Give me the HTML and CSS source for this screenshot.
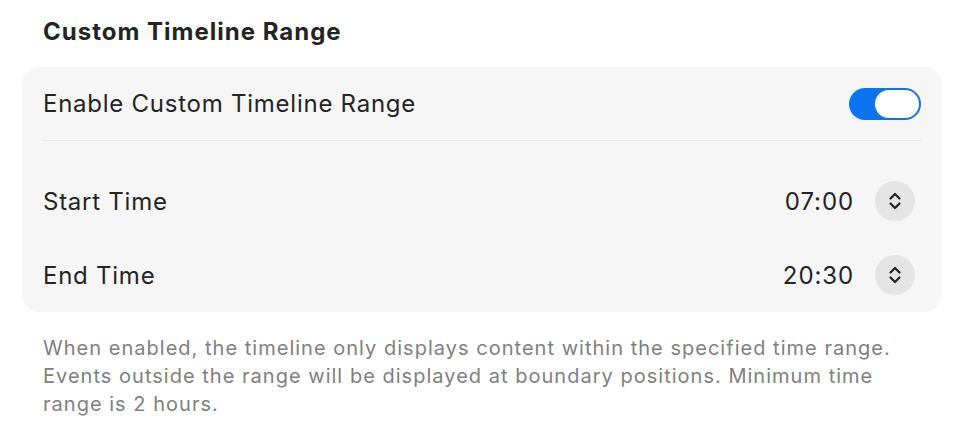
FILE: index.html
```html
<!DOCTYPE html>
<html lang="en">
<head>
    <meta charset="UTF-8">
    <meta name="viewport" content="width=device-width, initial-scale=1.0">
    <title>Custom Timeline Range</title>
    <link rel="stylesheet" href="styles.css">
</head>
<body>
    <h2 class="section-title">Custom Timeline Range</h2>
    <div class="card">
        <div class="row row-toggle">
            <span class="label">Enable Custom Timeline Range</span>
            <span class="toggle on"><span class="knob"></span></span>
        </div>
        <div class="divider"></div>
        <div class="times">
            <div class="row row-time">
                <span class="label">Start Time</span>
                <div class="value">
                    <span class="time">07:00</span>
                    <button class="stepper" aria-label="Change start time">
                        <svg width="14" height="18" viewBox="0 0 14 18"><path d="M2.5 6.5 L7 2 L11.5 6.5 M2.5 11.5 L7 16 L11.5 11.5" fill="none" stroke="#222" stroke-width="2.2" stroke-linecap="round" stroke-linejoin="round"/></svg>
                    </button>
                </div>
            </div>
            <div class="row row-time">
                <span class="label">End Time</span>
                <div class="value">
                    <span class="time">20:30</span>
                    <button class="stepper" aria-label="Change end time">
                        <svg width="14" height="18" viewBox="0 0 14 18"><path d="M2.5 6.5 L7 2 L11.5 6.5 M2.5 11.5 L7 16 L11.5 11.5" fill="none" stroke="#222" stroke-width="2.2" stroke-linecap="round" stroke-linejoin="round"/></svg>
                    </button>
                </div>
            </div>
        </div>
    </div>
    <p class="note">When enabled, the timeline only displays content within the specified time range. Events outside the range will be displayed at boundary positions. Minimum time range is 2 hours.</p>
</body>
</html>
```

FILE: styles.css
```css
body {
    margin: 0;
    padding: 0 16px 0 22px;
    font-family: Inter, "Noto Sans", sans-serif;
    color: #242424;
    background: #fff;
}
.section-title {
    margin: 17px 0 20px 21px;
    font-size: 24px;
    line-height: 30px;
    font-weight: 700;
    letter-spacing: 1px;
}
.card {
    background: #f6f6f6;
    border-radius: 18px;
    padding: 0 21px;
}
.row {
    display: flex;
    align-items: center;
    justify-content: space-between;
}
.row-toggle {
    height: 73px;
}
.label {
    font-size: 24px;
    letter-spacing: 0.75px;
}
.toggle {
    width: 72px;
    height: 32px;
    border-radius: 16px;
    background: #0b74ee;
    display: flex;
    align-items: center;
    justify-content: flex-end;
    padding: 0 2px;
    box-sizing: border-box;
}
.knob {
    width: 44px;
    height: 28px;
    border-radius: 14px;
    background: #fff;
}
.divider {
    height: 1px;
    background: #e6e6e6;
}
.times {
    padding-top: 23px;
}
.row-time {
    height: 74px;
}
.value {
    display: flex;
    align-items: center;
    gap: 21px;
    margin-right: 6px;
}
.time {
    font-size: 24px;
    letter-spacing: 0.9px;
}
.stepper {
    width: 40px;
    height: 40px;
    border-radius: 50%;
    border: none;
    background: #e4e4e4;
    padding: 0;
    display: flex;
    align-items: center;
    justify-content: center;
}
.note {
    margin: 22px 21px 0 21px;
    font-size: 20px;
    line-height: 28px;
    letter-spacing: 1.02px;
    color: #808080;
}
```
